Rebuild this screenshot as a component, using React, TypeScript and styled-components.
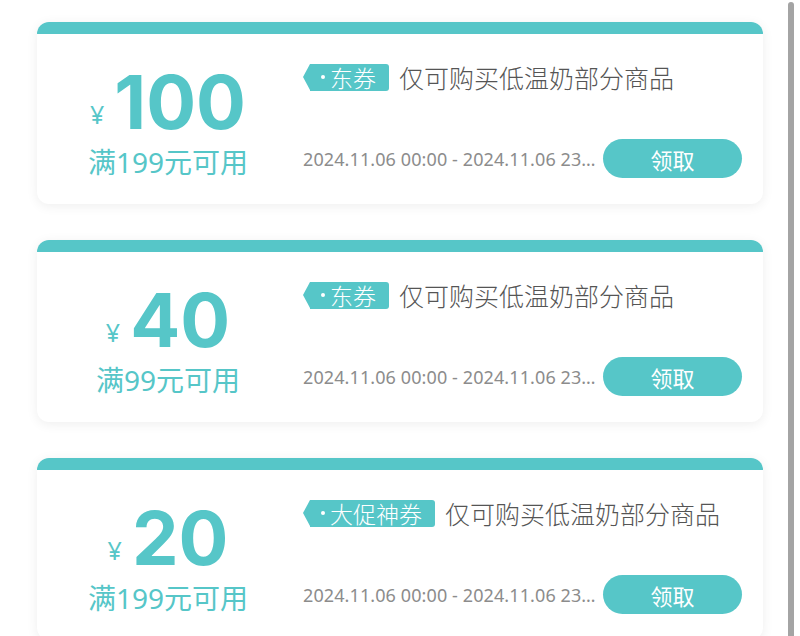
import React from 'react';
import styled, { createGlobalStyle } from 'styled-components';

const teal = '#56c6c8';

const GlobalStyle = createGlobalStyle`
  html, body {
    margin: 0;
    padding: 0;
    background: #fff;
    overflow: hidden;
  }
  body {
    font-family: 'Noto Sans', 'Noto Sans CJK SC', sans-serif;
  }
`;

const Page = styled.div`
  width: 800px;
  height: 636px;
  padding: 22px 0 0 37px;
  box-sizing: border-box;
  display: flex;
  flex-direction: column;
  gap: 36px;
`;

// overlay scrollbar thumb on the right edge
const ScrollThumb = styled.div`
  position: fixed;
  top: 2px;
  left: 788px;
  width: 6px;
  height: 700px;
  border-radius: 3px 3px 0 0;
  background: #a4a4a4;
`;

const Card = styled.div`
  width: 726px;
  height: 182px;
  flex-shrink: 0;
  display: flex;
  flex-direction: column;
  background: #fff;
  border-radius: 12px;
  overflow: hidden;
  box-shadow: 0 2px 12px rgba(0, 0, 0, 0.07);
`;

const TopBar = styled.div`
  height: 12px;
  background: ${teal};
`;

const Body = styled.div`
  flex: 1;
  display: flex;
`;

const Value = styled.div`
  width: 262px;
  display: flex;
  flex-direction: column;
  align-items: center;
  justify-content: center;
  padding-top: 12px;
  color: ${teal};
`;

const AmountRow = styled.div`
  display: flex;
  align-items: baseline;
`;

const Currency = styled.span`
  font-family: 'Noto Sans', sans-serif;
  font-size: 25px;
  margin-right: 10px;
  transform: translateY(-5px);
`;

const Amount = styled.span`
  font-family: Inter, sans-serif;
  font-weight: 700;
  font-size: 74px;
  line-height: 60px;
`;

const Threshold = styled.div`
  margin-top: 9px;
  font-family: 'Noto Sans', 'Noto Sans CJK SC', sans-serif;
  font-size: 28px;
  line-height: 34px;
`;

const Info = styled.div`
  flex: 1;
  min-width: 0;
  display: flex;
  flex-direction: column;
  justify-content: space-between;
  padding: 25px 21px 26px 4px;
`;

const TitleRow = styled.div`
  display: flex;
  align-items: center;
  gap: 10px;
`;

const Tag = styled.span`
  position: relative;
  display: inline-flex;
  align-items: center;
  height: 27px;
  margin-left: 7px;
  padding: 0 13px 0 11px;
  background: ${teal};
  border-radius: 0 3px 3px 0;
  color: #fff;
  font-family: 'Noto Sans CJK SC', sans-serif;
  font-weight: 300;
  font-size: 23px;
  white-space: nowrap;

  &::before {
    content: '';
    position: absolute;
    left: -7px;
    top: 0;
    border-right: 7px solid ${teal};
    border-top: 13.5px solid transparent;
    border-bottom: 13.5px solid transparent;
  }
`;

const Dot = styled.i`
  width: 4px;
  height: 4px;
  margin-right: 5px;
  border-radius: 50%;
  background: #fff;
`;

const Desc = styled.span`
  color: #555;
  font-family: 'Noto Sans CJK SC', sans-serif;
  font-weight: 300;
  font-size: 25px;
  white-space: nowrap;
`;

const FooterRow = styled.div`
  display: flex;
  align-items: center;
`;

const Period = styled.span`
  flex: 1;
  min-width: 0;
  margin-right: 3px;
  overflow: hidden;
  text-overflow: ellipsis;
  white-space: nowrap;
  color: #8c8c8c;
  font-family: 'Noto Sans', sans-serif;
  font-size: 18px;
  letter-spacing: 0.1px;
`;

const ClaimButton = styled.button`
  flex-shrink: 0;
  width: 139px;
  height: 39px;
  border: none;
  border-radius: 20px;
  background: ${teal};
  color: #fff;
  font-family: 'Noto Sans CJK SC', sans-serif;
  font-size: 22px;
  padding: 0;
  cursor: pointer;
`;

type Coupon = {
  amount: number;
  minSpend: number;
  tag: string;
  desc: string;
  period: string;
};

const coupons: Coupon[] = [
  { amount: 100, minSpend: 199, tag: '东券', desc: '仅可购买低温奶部分商品', period: '2024.11.06 00:00 - 2024.11.06 23:59:59' },
  { amount: 40, minSpend: 99, tag: '东券', desc: '仅可购买低温奶部分商品', period: '2024.11.06 00:00 - 2024.11.06 23:59:59' },
  { amount: 20, minSpend: 199, tag: '大促神券', desc: '仅可购买低温奶部分商品', period: '2024.11.06 00:00 - 2024.11.06 23:59:59' },
];

const CouponCard: React.FC<{ coupon: Coupon }> = ({ coupon }) => (
  <Card>
    <TopBar />
    <Body>
      <Value>
        <AmountRow>
          <Currency>¥</Currency>
          <Amount>{coupon.amount}</Amount>
        </AmountRow>
        <Threshold>满{coupon.minSpend}元可用</Threshold>
      </Value>
      <Info>
        <TitleRow>
          <Tag>
            <Dot />
            {coupon.tag}
          </Tag>
          <Desc>{coupon.desc}</Desc>
        </TitleRow>
        <FooterRow>
          <Period>{coupon.period}</Period>
          <ClaimButton>领取</ClaimButton>
        </FooterRow>
      </Info>
    </Body>
  </Card>
);

const App: React.FC = () => (
  <>
    <GlobalStyle />
    <Page>
      {coupons.map((c, i) => (
        <CouponCard key={i} coupon={c} />
      ))}
    </Page>
    <ScrollThumb />
  </>
);

export default App;
